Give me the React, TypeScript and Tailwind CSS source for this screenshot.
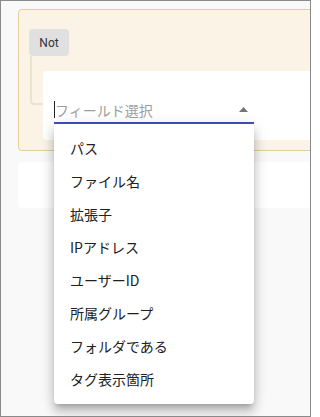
import React from "react";

const items = [
  "パス",
  "ファイル名",
  "拡張子",
  "IPアドレス",
  "ユーザーID",
  "所属グループ",
  "フォルダである",
  "タグ表示箇所",
];

export default function App() {
  return (
    <div
      className="w-[311px] h-[417px] box-border border border-[#8a8a8a] bg-[#f9f9f9] overflow-hidden pl-[17px] pt-[8px]"
      style={{ fontFamily: '"Noto Sans CJK JP", "Noto Sans", sans-serif' }}
    >
      <div className="w-[320px] h-[142px] box-border border border-[#e5cd98] rounded-[4px] bg-[#faf3e6] pl-[10px] pt-[19px]">
        <div
          className="w-[40px] h-[27px] rounded-[4px] bg-[#e0e0e0] flex items-center justify-center text-[12px] text-[#333]"
          style={{ fontFamily: "Roboto, 'Liberation Sans', sans-serif" }}
        >
          Not
        </div>
        <div className="flex items-start">
          <div className="ml-[1px] w-[13px] h-[49px] box-border border-l-2 border-b-2 border-[#ebe2d0] rounded-bl-[4px]" />
          <div className="flex-1 pt-[15px]">
            <div className="h-[69px] bg-white rounded-[4px] pl-[11px] pt-[27px]">
              <div className="relative w-[200px] h-[26px] box-border border-b-2 border-[#3f51b5] flex items-center">
                <div className="absolute left-0 top-[3px] w-[1px] h-[17px] bg-[#222]" />
                <span className="ml-[1px] -mt-[1px] text-[14px] leading-none text-[#9e9e9e]">フィールド選択</span>
                <svg className="absolute right-[6px] top-[9px]" width="9" height="5" viewBox="0 0 9 5">
                  <path d="M0 5 L4.5 0 L9 5 Z" fill="#757575" />
                </svg>
                <div className="absolute left-0 top-[26px] w-[200px] h-[280px] bg-white rounded-[4px] pt-[8px] z-10 shadow-[0_5px_5px_-3px_rgba(0,0,0,0.2),0_8px_10px_1px_rgba(0,0,0,0.14),0_3px_14px_2px_rgba(0,0,0,0.12)]">
                  {items.map((t) => (
                    <div key={t} className="h-[33px] flex items-center pl-[16px] text-[14px] text-[#212121]">
                      {t}
                    </div>
                  ))}
                </div>
              </div>
            </div>
          </div>
        </div>
      </div>
      <div className="mt-[11px] w-[320px] h-[46px] bg-white rounded-[4px]" />
    </div>
  );
}
